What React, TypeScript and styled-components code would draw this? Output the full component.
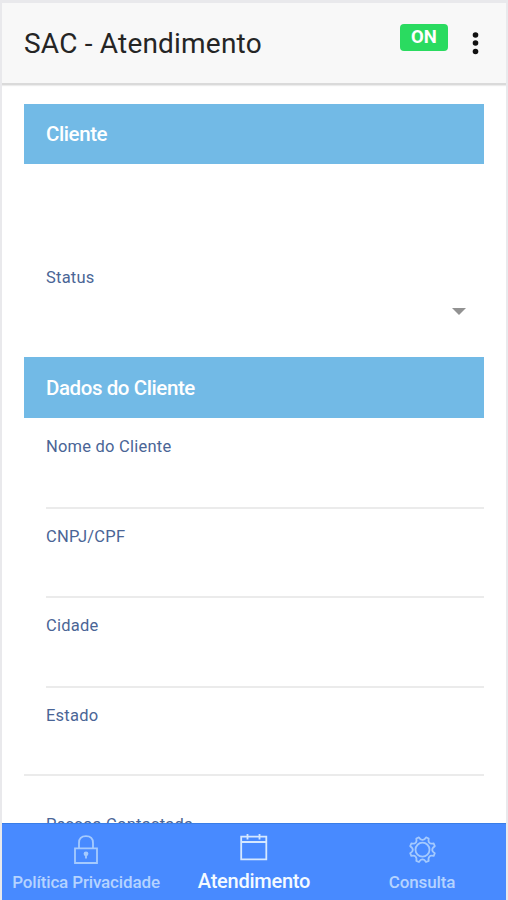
import React from "react";
import styled, { createGlobalStyle } from "styled-components";

const GlobalStyle = createGlobalStyle`
  * { box-sizing: border-box; }
  body { margin: 0; background: #fff; font-family: Roboto, sans-serif; }
`;

const Screen = styled.div`
  display: flex;
  flex-direction: column;
  width: 508px;
  height: 900px;
  overflow: hidden;
  border: solid #e9e9ec;
  border-width: 3px 2px 0 2px;
  background: #fff;
`;

const Header = styled.header`
  display: flex;
  flex: none;
  align-items: flex-start;
  height: 82px;
  padding: 0 24px 0 22px;
  background: #f8f8f8;
  border-bottom: 2px solid #dadada;
  box-shadow: 0 1px 1px #ececec;
  z-index: 1;
`;

const Title = styled.h1`
  flex: 1;
  margin: 0;
  padding-top: 21px;
  font-size: 28px;
  line-height: 40px;
  font-weight: 400;
  letter-spacing: 0.2px;
  color: #252525;
  white-space: nowrap;
`;

const StatusBadge = styled.span`
  width: 48px;
  height: 27px;
  margin: 21px 22px 0 0;
  border-radius: 4px;
  background: #2adb60;
  color: #fff;
  font-size: 18.5px;
  line-height: 27px;
  font-weight: 700;
  text-align: center;
`;

const MenuButton = styled.button`
  display: flex;
  width: 12px;
  margin: 28px 0 0;
  padding: 0;
  border: 0;
  background: none;
`;

const Content = styled.main`
  flex: 1;
  min-height: 0;
  padding: 19px 22px 0;
  overflow: hidden;
`;

const SectionTitle = styled.h2<{ $height: number }>`
  height: ${(p) => p.$height}px;
  margin: 0;
  padding-left: 22px;
  background: #72bae6;
  color: #fff;
  font-size: 20.5px;
  line-height: ${(p) => (p.$height > 60 ? 63 : 60)}px;
  font-weight: 500;
  letter-spacing: -0.42px;
`;

const Label = styled.span`
  display: block;
  font-size: 16.5px;
  line-height: 20px;
  letter-spacing: 0.22px;
  color: #4a6596;
  white-space: nowrap;
`;

const SelectField = styled.div`
  display: flex;
  justify-content: space-between;
  height: 193px;
  padding: 104px 18px 0 22px;
`;

const Arrow = styled.span`
  width: 0;
  height: 0;
  margin-top: 40px;
  border: solid transparent;
  border-width: 7px 7px 0;
  border-top-color: #929292;
`;

const Field = styled.div<{ $height: number; $last?: boolean }>`
  height: ${(p) => p.$height}px;
  margin-left: ${(p) => (p.$last ? 0 : 22)}px;
  padding: 18px 0 0 ${(p) => (p.$last ? 22 : 0)}px;
  border-bottom: 2px solid #ebebeb;
`;

const FieldList = styled.div`
  padding-top: 1px;
`;

const ContactField = styled.div`
  padding: 39px 0 0 22px;
`;

const TabBar = styled.nav`
  display: grid;
  grid-template-columns: repeat(3, 168px);
  flex: none;
  height: 77px;
  background: #488aff;
  border-top: 1px solid #397de7;
`;

const Tab = styled.a<{ $active?: boolean }>`
  display: flex;
  flex-direction: column;
  align-items: center;
  color: ${(p) => (p.$active ? "#f4faff" : "#b5d3ff")};
  font-size: ${(p) => (p.$active ? 20 : 17)}px;
  line-height: 24px;
  font-weight: 500;
  letter-spacing: ${(p) => (p.$active ? -0.25 : -0.15)}px;
  white-space: nowrap;
  svg {
    display: block;
    flex: none;
    margin: 8px 0 ${(p) => (p.$active ? 5 : 6)}px;
    color: ${(p) => (p.$active ? "#d5e8ff" : "#a5cafe")};
  }
`;

const LockIcon = () => (
  <svg width="28" height="32" viewBox="0 0 28 32" fill="none" stroke="currentColor" strokeWidth="1.8">
    <path d="M3 16.3H25V31H3ZM7 16V11Q7 4.2 14 4.2T21 11V16" />
    <circle cx="14" cy="21.8" r="2.4" fill="currentColor" stroke="none" />
    <path d="M14 22V26.5" />
  </svg>
);

const CalendarIcon = () => (
  <svg width="30" height="32" viewBox="0 0 30 32" fill="none" stroke="currentColor" strokeWidth="1.8">
    <path d="M2.2 4.7H27.3V27.3H2.2ZM2 10H27.5M8.5 2V7.5M20.5 2V7.5" />
  </svg>
);

const gear = Array.from({ length: 8 }, (_, i) => {
  const at = (r: number, degrees: number) => {
    const a = ((i * 45 + degrees) * Math.PI) / 180;
    return `${(15.5 + r * Math.cos(a)).toFixed(2)} ${(17.7 + r * Math.sin(a)).toFixed(2)}`;
  };
  return `${i ? "L" : "M"}${at(12.8, 16)}L${at(12.8, 29)}Q${at(9.6, 35)} ${at(9.8, 45)}Q${at(9.6, 55)} ${at(12.8, 61)}`;
}).join("") + "Z";

const GearIcon = () => (
  <svg width="30" height="32" viewBox="0 0 30 32" fill="none" stroke="currentColor" strokeWidth="1.8" strokeLinejoin="round">
    <path d={gear} />
    <circle cx="15.5" cy="17.7" r="7" />
  </svg>
);

const fields = [
  { label: "Nome do Cliente", height: 90 },
  { label: "CNPJ/CPF", height: 89 },
  { label: "Cidade", height: 90 },
  { label: "Estado", height: 88, last: true },
];

export default function App() {
  return (
    <>
      <GlobalStyle />
      <Screen>
        <Header>
          <Title>SAC - Atendimento</Title>
          <StatusBadge>ON</StatusBadge>
          <MenuButton aria-label="Menu">
            <svg width="12" height="26" viewBox="0 0 12 26" fill="#111">
              <circle cx="5.5" cy="4" r="2.8" />
              <circle cx="5.5" cy="12" r="2.8" />
              <circle cx="5.5" cy="20.5" r="2.8" />
            </svg>
          </MenuButton>
        </Header>
        <Content>
          <SectionTitle $height={60}>Cliente</SectionTitle>
          <SelectField>
            <Label>Status</Label>
            <Arrow />
          </SelectField>
          <SectionTitle $height={61}>Dados do Cliente</SectionTitle>
          <FieldList>
            {fields.map((f) => (
              <Field key={f.label} $height={f.height} $last={f.last}>
                <Label>{f.label}</Label>
              </Field>
            ))}
          </FieldList>
          <ContactField>
            <Label>Pessoa Contactada</Label>
          </ContactField>
        </Content>
        <TabBar>
          <Tab>
            <LockIcon />
            Política Privacidade
          </Tab>
          <Tab $active>
            <CalendarIcon />
            Atendimento
          </Tab>
          <Tab>
            <GearIcon />
            Consulta
          </Tab>
        </TabBar>
      </Screen>
    </>
  );
}
